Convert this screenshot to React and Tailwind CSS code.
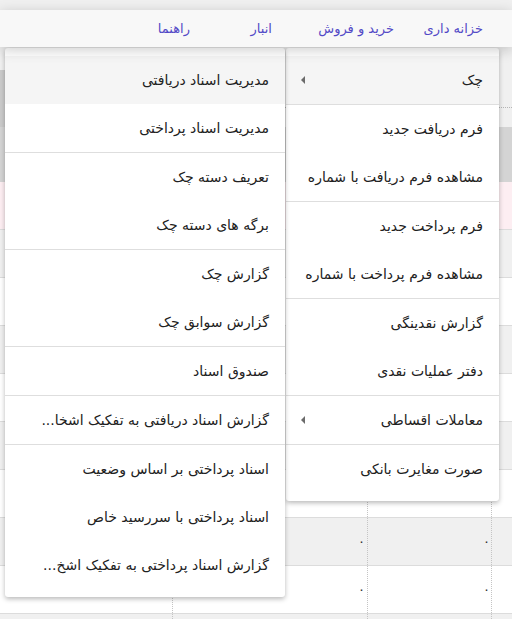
import React from 'react';

const navItems = [
    { label: 'خزانه داری', w: 'w-[89px]' },
    { label: 'خرید و فروش', w: 'w-[122px]' },
    { label: 'انبار', w: 'w-[82px]' },
    { label: 'راهنما', w: 'w-[40px]' },
];

// main treasury menu, grouped by divider
const mainMenu = [
    [{ label: 'چک', sub: true, active: true }],
    [{ label: 'فرم دریافت جدید' }, { label: 'مشاهده فرم دریافت با شماره' }],
    [{ label: 'فرم پرداخت جدید' }, { label: 'مشاهده فرم پرداخت با شماره' }],
    [{ label: 'گزارش نقدینگی' }, { label: 'دفتر عملیات نقدی' }],
    [{ label: 'معاملات اقساطی', sub: true }],
    [{ label: 'صورت مغایرت بانکی' }],
];

const checkMenu = [
    [{ label: 'مدیریت اسناد دریافتی', active: true }, { label: 'مدیریت اسناد پرداختی' }],
    [{ label: 'تعریف دسته چک' }, { label: 'برگه های دسته چک' }],
    [{ label: 'گزارش چک' }, { label: 'گزارش سوابق چک' }],
    [{ label: 'صندوق اسناد' }],
    [{ label: 'گزارش اسناد دریافتی به تفکیک اشخا...' }],
    [
        { label: 'اسناد پرداختی بر اساس وضعیت' },
        { label: 'اسناد پرداختی با سررسید خاص' },
        { label: 'گزارش اسناد پرداختی به تفکیک اشخ...' },
    ],
];

// background table rows (only strips of it show behind the menus)
const rows = [
    { bg: 'bg-[#f0f0f0]' },
    { bg: 'bg-white' },
    { bg: 'bg-[#f0f0f0]' },
    { bg: 'bg-white' },
    { bg: 'bg-[#f0f0f0]' },
    { bg: 'bg-white' },
    { bg: 'bg-[#f0f0f0]', zero: true },
    { bg: 'bg-white', zero: true },
    { bg: 'bg-[#f0f0f0]' },
];

const MenuItem = ({ item }) => (
    <div className={`flex h-12 items-center justify-between pr-4 pl-[15px] ${item.active ? 'bg-[#f5f5f5]' : ''}`}>
        <span className="whitespace-nowrap">{item.label}</span>
        {item.sub && (
            <span className="h-0 w-0 shrink-0 border-y-[4px] border-r-[4px] border-y-transparent border-r-[#6b6b6b]"></span>
        )}
    </div>
);

const Menu = ({ groups, className }) => (
    <div className={`absolute top-[48px] rounded-[3px] bg-white py-2 text-[14px] text-[#212121] shadow-[0_2px_5px_rgba(0,0,0,0.28)] ${className}`}>
        {groups.map((group, i) => (
            <div key={i} className={i > 0 ? 'border-t border-[#dedede]' : ''}>
                {group.map((item) => (
                    <MenuItem key={item.label} item={item} />
                ))}
            </div>
        ))}
    </div>
);

export default function App() {
    return (
        <div dir="rtl" className="relative h-[619px] w-[512px] overflow-hidden bg-[#f0f0f0] font-['DejaVu_Sans',sans-serif]">
            <div className="h-[10px] bg-[#f0f0f0]"></div>

            {/* top navigation */}
            <nav className="relative z-10 flex h-[37px] items-center bg-[#f8f8f8] pr-[29px] text-[13px] text-[#5249c6] shadow-[0_3px_14px_rgba(0,0,0,0.2)]">
                {navItems.map((n) => (
                    <div key={n.label} className={`${n.w} shrink-0`}>
                        {n.label}
                    </div>
                ))}
            </nav>

            {/* toolbar strip above the grid */}
            <div className="flex h-[80px] items-start">
                <div className="h-[61px] flex-1 border-b border-dotted border-[#b5b5b5]"></div>
                <div className="mt-[23px] h-[57px] w-[40px] bg-[#cacaca]"></div>
            </div>

            {/* grid */}
            <div className="h-[55px] bg-[#d4d4d4]"></div>
            <div className="h-[48px] border-b border-[#dcdcdc] bg-[#fdeef2]"></div>
            {rows.map((r, i) => (
                <div
                    key={i}
                    className={`grid h-[48px] grid-cols-[21px_124px_195px_172px] border-b border-[#dcdcdc] text-[13px] text-[#333] ${r.bg}`}
                >
                    <div className="border-l border-dotted border-[#c4c4c4]"></div>
                    <div className="flex items-center border-l border-dotted border-[#c4c4c4] pr-[1px]">{r.zero ? '۰' : ''}</div>
                    <div className="flex items-center border-l border-dotted border-[#c4c4c4] pr-[2px]">{r.zero ? '۰' : ''}</div>
                    <div></div>
                </div>
            ))}

            {/* open dropdowns */}
            <Menu groups={mainMenu} className="left-[286px] w-[213px]" />
            <Menu groups={checkMenu} className="left-[5px] w-[280px]" />
        </div>
    );
}
